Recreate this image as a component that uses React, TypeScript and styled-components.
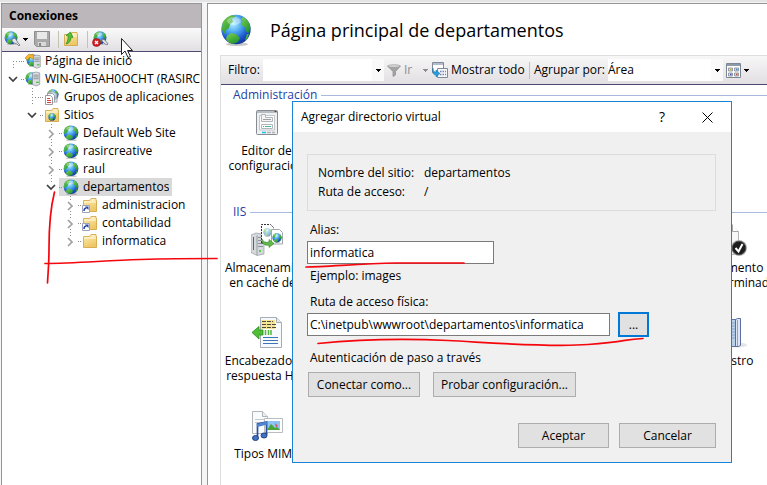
import React from "react";
import styled, { createGlobalStyle, css } from "styled-components";

const GlobalStyle = createGlobalStyle`
  * { box-sizing: border-box; }
  html, body { margin: 0; padding: 0; }
  body, button, input, select {
    font-family: "Open Sans", "Noto Sans", "Segoe UI", sans-serif;
    font-size: 12px;
    line-height: 16px;
    color: #000;
  }
  body { overflow: hidden; }
`;

/* ---------- window frame ---------- */

const Screen = styled.div`
  position: relative;
  display: flex;
  gap: 5px;
  min-height: 100vh;
  padding: 3px 0 0 1px;
  background: #f5f5f5;
  box-shadow: inset 0 2px 0 #e4e4e4;
`;

const Sidebar = styled.aside`
  flex: 0 0 201px;
  min-width: 0;
  display: flex;
  flex-direction: column;
  overflow: hidden;
  background: #fff;
  border: 1px solid #959595;
  border-bottom: 0;
`;

const MainPane = styled.main`
  flex: 1;
  min-width: 0;
  display: flex;
  flex-direction: column;
  overflow: hidden;
  background: #fff;
  border: solid #959595;
  border-width: 1px 0 0 1px;
`;

/* ---------- connections sidebar ---------- */

const SidebarTitle = styled.h2`
  margin: 0;
  height: 24px;
  padding: 4px 7px;
  font-size: 12px;
  line-height: 16px;
  font-weight: 700;
  background: #bbb7bb;
`;

const SidebarTools = styled.div`
  display: flex;
  align-items: center;
  height: 24px;
  padding: 0 2px 1px;
  background: linear-gradient(#fafafa, #e2dfe2);
  border-bottom: 1px solid #514b70;
`;

const ToolButton = styled.button<{ $gapAfter?: number }>`
  display: flex;
  align-items: center;
  gap: 3px;
  flex: none;
  margin-right: ${(p) => p.$gapAfter ?? 0}px;
  padding: 0;
  border: 0;
  background: none;
`;

const Divider = styled.span<{ $space: number }>`
  flex: none;
  width: 1px;
  height: 17px;
  margin-right: ${(p) => p.$space}px;
  background: #c3c3ae;
`;

const TreeList = styled.ul`
  margin: 0;
  padding: 0;
  list-style: none;
`;

const TreeRow = styled.li<{ $depth: number }>`
  display: flex;
  height: 18px;
  padding-left: ${(p) => 3 + p.$depth * 19}px;
  white-space: nowrap;
  svg { flex: none; }
`;

const TreeLabel = styled.span<{ $selected?: boolean }>`
  display: flex;
  align-items: center;
  min-width: 0;
  padding-right: ${(p) => (p.$selected ? 3 : 0)}px;
  background: ${(p) => (p.$selected ? "#d9d9d9" : "transparent")};
`;

const TreeText = styled.span`
  padding-left: 4px;
  overflow: hidden;
`;

/* ---------- main pane ---------- */

const PageHeader = styled.header`
  display: flex;
  align-items: center;
  gap: 18px;
  height: 51px;
  padding-left: 12px;
`;

const PageTitle = styled.h1`
  margin: 0;
  font-size: 18px;
  line-height: 24px;
  font-weight: 400;
  white-space: nowrap;
`;

const Feature = styled.div`
  flex: 1;
  margin-left: 12px;
  border: solid #dedede;
  border-width: 1px 0 0 1px;
`;

const FilterBar = styled.div`
  display: flex;
  align-items: center;
  height: 29px;
  padding-left: 7px;
  background: linear-gradient(#f8f7f8, #e1dfe1);
  border-bottom: 1px solid #4d4770;
  white-space: nowrap;
`;

const BarLabel = styled.label<{ $width: number }>`
  flex: 0 0 ${(p) => p.$width}px;
`;

const Combo = styled.span<{ $width: number }>`
  display: grid;
  grid-template-columns: 1fr 12px;
  align-items: center;
  flex: 0 0 ${(p) => p.$width}px;
  height: 22px;
  margin-right: 3px;
  background: linear-gradient(to left, #f9f9f9 12px, #fff 12px);
  svg { grid-area: 1 / 2; justify-self: center; pointer-events: none; }
`;

const fieldReset = css`
  min-width: 0;
  width: 100%;
  height: 22px;
  padding: 0;
  border: 0;
  outline: 0;
  background: transparent;
  appearance: none;
  grid-row: 1;
`;

const ComboInput = styled.input`
  ${fieldReset}
  grid-column: 1;
`;

const ComboSelect = styled.select`
  ${fieldReset}
  grid-column: 1 / 3;
`;

const BarButton = styled(ToolButton)<{ $width: number; $disabled?: boolean }>`
  flex: 0 0 ${(p) => p.$width}px;
  gap: 3px;
  color: ${(p) => (p.$disabled ? "#8d8d8d" : "#000")};
`;

const BarText = styled.span`
  flex: 1;
  text-align: left;
`;

const Group = styled.section<{ $height?: number }>`
  min-height: ${(p) => p.$height ?? 0}px;
  padding-top: 2px;
`;

const GroupTitle = styled.h3`
  display: flex;
  align-items: center;
  gap: 4px;
  margin: 0;
  padding-left: 12px;
  font-size: 12px;
  line-height: 16px;
  font-weight: 400;
  color: #1e3fa5;
  &::after {
    content: "";
    flex: 1;
    height: 1px;
    background: #a9b8dd;
  }
`;

const IconGrid = styled.div`
  display: grid;
  grid-template-columns: 91px repeat(5, 93px);
  grid-auto-rows: 93px;
`;

const FeatureLink = styled.a<{ $column?: number }>`
  grid-column: ${(p) => p.$column ?? 1};
  display: flex;
  flex-direction: column;
  align-items: center;
  padding-top: 4px;
  line-height: 15px;
  text-align: center;
  white-space: pre;
  color: #000;
  text-decoration: none;
  svg { margin-bottom: 4px; flex: none; }
`;

/* ---------- dialog ---------- */

const Dialog = styled.form`
  position: absolute;
  left: 292px;
  top: 101px;
  width: 440px;
  background: #f0f0f0;
  border: 1px solid #1883d7;
`;

const DialogBar = styled.div`
  display: flex;
  align-items: center;
  height: 30px;
  padding: 0 18px 0 8px;
  background: #fff;
`;

const DialogTitle = styled.h2`
  flex: 1;
  margin: 0;
  font-size: 12px;
  line-height: 16px;
  font-weight: 400;
`;

const CaptionButton = styled(ToolButton)`
  justify-content: center;
  width: 12px;
  margin-left: 33px;
  font-size: 14px;
`;

const DialogBody = styled.div`
  padding: 22px 15px 14px 14px;
`;

const SiteInfo = styled.dl`
  display: grid;
  grid-template-columns: 106px 1fr;
  row-gap: 3px;
  margin: 0 0 11px;
  padding: 10px;
  border: 1px solid #dcdcdc;
  dt, dd { margin: 0; }
`;

const Field = styled.div`
  display: flex;
  flex-direction: column;
  margin-bottom: 10px;
  label, p { margin: 0; padding-left: 3px; }
  &:last-child { margin-bottom: 0; }
`;

const FieldLine = styled.div`
  display: flex;
  align-items: center;
  gap: 8px;
  height: 25px;
  margin: 2px 0 3px;
`;

const TextBox = styled.input<{ $width: number }>`
  width: ${(p) => p.$width}px;
  height: 23px;
  padding: 0 2px;
  border: 1px solid #7a7a7a;
  border-radius: 0;
  background: #fff;
  outline: 0;
`;

const PushButton = styled.button<{ $width: number; $focused?: boolean }>`
  flex: 0 0 ${(p) => p.$width}px;
  height: 25px;
  padding: 0;
  border: ${(p) => (p.$focused ? "2px solid #0078d7" : "1px solid #adadad")};
  border-radius: 0;
  background: #e1e1e1;
`;

const ButtonRow = styled.div<{ $end?: boolean }>`
  display: flex;
  gap: ${(p) => (p.$end ? 10 : 13)}px;
  justify-content: ${(p) => (p.$end ? "flex-end" : "flex-start")};
  margin-top: ${(p) => (p.$end ? 26 : 6)}px;
  padding-left: 1px;
`;

const Overlay = styled.svg`
  position: absolute;
  left: 0;
  top: 0;
  pointer-events: none;
`;

/* ---------- drawings ---------- */

const GlobeArt = () => (
  <>
    <defs>
      <radialGradient id="sea" cx="0.4" cy="0.3" r="0.75">
        <stop offset="0" stopColor="#b8f2ff" />
        <stop offset="0.4" stopColor="#4aa6f0" />
        <stop offset="0.75" stopColor="#1c50cc" />
        <stop offset="1" stopColor="#10308c" />
      </radialGradient>
      <linearGradient id="land" x2="0.6" y2="1">
        <stop offset="0" stopColor="#7fd04e" />
        <stop offset="1" stopColor="#22962f" />
      </linearGradient>
    </defs>
    <ellipse cx="17" cy="30.3" rx="11" ry="1.7" fill="#777" opacity="0.4" />
    <circle cx="16" cy="15.5" r="14.7" fill="url(#sea)" />
    <path d="M2.500 9C5 4 9 1.500 14 1l1 2-3 2 1 3-3 2-1 4-3 2-1 4-3-4z" fill="url(#land)" />
    <path d="M23 3c4 2 7 6 7.500 11l-2 5-2-1-1-4-4-3 1-4-1-2z" fill="url(#land)" />
    <path d="M7 22l4-3 5 1 4 4-2 4-5 2-5-2-2-3z" fill="url(#land)" />
    <path d="M27 20h2l-2 5-2 1z" fill="#43b434" />
    <ellipse cx="14" cy="7" rx="7" ry="4" fill="#fff" opacity="0.35" />
  </>
);

const Globe = ({ size = 16 }: { size?: number }) => (
  <svg width={size} height={size} viewBox="0 0 32 32"><GlobeArt /></svg>
);

const MiniGlobe = ({ x, y, s }: { x: number; y: number; s: number }) => (
  <svg x={x} y={y} width={s} height={s} viewBox="0 0 32 32"><GlobeArt /></svg>
);

const ServerTower = ({ x = 0, y = 0, s = 1 }: { x?: number; y?: number; s?: number }) => (
  <g transform={`translate(${x} ${y}) scale(${s})`}>
    <path d="M0 1l4-1 4 1v13l-4 1.500L0 14z" fill="#d9dde0" stroke="#7c848b" strokeWidth="0.7" />
    <path d="M1 3.500h6M1 5.500h6M1 7.500h6" stroke="#7d868d" strokeWidth="0.9" />
    <path d="M4 11.500h3" stroke="#48c23c" strokeWidth="1.400" />
  </g>
);

const HomeIcon = () => (
  <svg width="16" height="16" viewBox="0 0 16 16">
    <MiniGlobe x={1} y={1} s={13} />
    <path d="M0 5l4-4 2 1 2-1 1 4-2 1-2-2-3 3z" fill="#f3b62d" stroke="#c07d12" strokeWidth="0.6" />
    <ServerTower x={8.500} y={2} s={0.85} />
  </svg>
);

const ServerIcon = () => (
  <svg width="16" height="16" viewBox="0 0 16 16">
    <MiniGlobe x={0} y={1} s={13} />
    <ServerTower x={7.500} y={1} s={0.9} />
  </svg>
);

const PoolsIcon = () => (
  <svg width="16" height="16" viewBox="0 0 16 16">
    <MiniGlobe x={3} y={0} s={12} />
    <path d="M4 3h6l3 2v8H4z" fill="#fff" fillOpacity="0.6" stroke="#8a8f99" strokeWidth="0.8" />
    <path d="M3.500 12V4.500h5l2 2V13" fill="#fff" stroke="#8a8f99" strokeWidth="0.8" />
    <path d="M1.500 6.500h5l2 2v7h-7z" fill="#fff" stroke="#7e838d" strokeWidth="0.8" />
    <path d="M3 9.500h3M3 11.500h4M3 13.500h4" stroke="#d1423c" />
  </svg>
);

const Folder = () => (
  <>
    <defs>
      <linearGradient id="folder" x2="0.4" y2="1">
        <stop offset="0" stopColor="#ffeeb0" />
        <stop offset="1" stopColor="#eec766" />
      </linearGradient>
    </defs>
    <path d="M1.500 3.500h6l1.500-2h5v2h.5v11h-13z" fill="url(#folder)" stroke="#cf9f3d" strokeWidth="0.8" />
    <path d="M2 5h12M9.500 3h4" stroke="#fffbe6" />
  </>
);

const FolderIcon = () => (
  <svg width="16" height="16" viewBox="0 0 16 16"><Folder /></svg>
);

const SitesIcon = () => (
  <svg width="16" height="16" viewBox="0 0 16 16"><Folder /><MiniGlobe x={4} y={6} s={8} /></svg>
);

const LinkFolderIcon = () => (
  <svg width="16" height="16" viewBox="0 0 16 16">
    <Folder />
    <path d="M.5 8.500h7v7h-7z" fill="#fff" stroke="#9da3b8" />
    <path d="M2 14c0-2 1-3 2.500-3" fill="none" stroke="#253fae" strokeWidth="1.400" />
    <path d="M3 9.500h3.500V13z" fill="#253fae" />
  </svg>
);

type ExpanderProps = { state?: string; above?: boolean; below?: boolean; joint?: boolean };

const Expander = ({ state, above, below, joint }: ExpanderProps) => (
  <svg width="16" height="18" viewBox="0 0 16 18">
    <g stroke="#8c8c8c" strokeDasharray="1 2" shapeRendering="crispEdges">
      {above && <path d={joint ? "M8.500 0v9" : "M8.500 0v4"} />}
      {below && <path d={joint ? "M8.500 9v9" : "M8.500 15v3"} />}
      {joint && <path d="M8 9.500h8" />}
    </g>
    {state === "open" && <path d="M4 7l4 4 4-4" fill="none" stroke="#404040" strokeWidth="1.700" />}
    {state === "closed" && <path d="M6 6l4 4-4 4" fill="none" stroke="#a0a0a0" strokeWidth="1.700" />}
  </svg>
);

const Stub = () => (
  <svg width="4" height="18" viewBox="0 0 4 18">
    <path d="M0 9.500h4" stroke="#8c8c8c" strokeDasharray="1 1" shapeRendering="crispEdges" />
  </svg>
);

const Caret = ({ color = "#000" }: { color?: string }) => (
  <svg width="5" height="3" viewBox="0 0 5 3" shapeRendering="crispEdges">
    <path d="M0 0h5v1H4v1H3v1H2V2H1V1H0z" fill={color} />
  </svg>
);

const ConnectIcon = () => (
  <svg width="16" height="16" viewBox="0 0 16 16">
    <MiniGlobe x={0} y={0} s={14} />
    <path d="M8 8l3-1 2 3 1 2 2 2-1 1-2-2-3-1-2-2z" fill="#dfe4ea" stroke="#68747f" strokeWidth="0.8" />
  </svg>
);

const SaveIcon = () => (
  <svg width="16" height="16" viewBox="0 0 16 16">
    <path d="M.5.500h15v15h-13l-2-2z" fill="#a9a9a9" stroke="#8f8f8f" />
    <path d="M3 1h10v7H3z" fill="#e8e8e8" />
    <path d="M4 11h8v4H4z" fill="#d8d8d8" />
    <path d="M5 12h2v3H5z" fill="#858585" />
  </svg>
);

const UpFolderIcon = () => (
  <svg width="16" height="16" viewBox="0 0 16 16">
    <Folder />
    <path d="M3 13c4-1 5-4 5-7l2 .5L7.500 1 3 4.500l2.200.500C5 8 5 10 3 13z" fill="#55c139" stroke="#2c8420" strokeWidth="0.7" />
  </svg>
);

const DisconnectIcon = () => (
  <svg width="17" height="16" viewBox="0 0 17 16">
    <MiniGlobe x={1} y={0} s={14} />
    <path d="M10 8l3 1 3 4-1 1-2-1-3-3z" fill="#dfe4ea" stroke="#68747f" strokeWidth="0.8" />
    <circle cx="4.500" cy="11.500" r="4" fill="#d21f26" stroke="#8f1116" strokeWidth="0.6" />
    <path d="M3 10l3 3M6 10l-3 3" stroke="#fff" strokeWidth="1.300" />
  </svg>
);

const FunnelIcon = () => (
  <svg width="14" height="13" viewBox="0 0 14 13">
    <path d="M.5 2C2 .5 12 .5 13.500 2L8.500 7.500V11L6 12.500v-5z" fill="#a4a4a4" stroke="#8b8b8b" strokeWidth="0.7" />
    <ellipse cx="7" cy="2" rx="5.500" ry="1" fill="#d0d0d0" />
  </svg>
);

const ShowAllIcon = () => (
  <svg width="16" height="16" viewBox="0 0 16 16">
    <path d="M.5.500h11v10H.5z" fill="#fff" stroke="#7f8b99" />
    <path d="M1 2h10" stroke="#b3bdc9" strokeWidth="2" />
    <path d="M5.500 6.500h10v9h-10z" fill="#f4f7fb" stroke="#7f8b99" />
    <path d="M8 9.500h6M8 12.500h6" stroke="#7684a7" strokeWidth="1.500" strokeDasharray="1.500 1" />
    <path d="M1 6c0 3 1 4 3 4V8l4 3.500L4 15v-2C1 13 0 10 1 6z" fill="#2b9bdc" stroke="#1b6fa6" strokeWidth="0.5" />
  </svg>
);

const ViewIcon = () => (
  <svg width="15" height="15" viewBox="0 0 15 15">
    <path d="M.5.500h14v14H.5z" fill="#fff" stroke="#7c8793" />
    <path d="M1 2h13" stroke="#8e9aa6" strokeWidth="2" />
    <path d="M2.500 5h4v3h-4zM8.500 5h4v3h-4zM2.500 10h4v3h-4zM8.500 10h4v3h-4z" fill="#dfe3e8" stroke="#7c8793" strokeWidth="0.8" />
    <path d="M4 6.500h1.500" stroke="#c9a21e" strokeWidth="1.500" />
    <path d="M10 6.500h1.500" stroke="#2d8ed2" strokeWidth="1.500" />
    <path d="M4 11.500h1.500" stroke="#4a43c0" strokeWidth="1.500" />
    <path d="M10 11.500h1.500" stroke="#cc4c22" strokeWidth="1.500" />
  </svg>
);

const CloseIcon = () => (
  <svg width="11" height="11" viewBox="0 0 11 11">
    <path d="M.5.500l10 10M10.500.500l-10 10" stroke="#000" />
  </svg>
);

const ConfigEditorIcon = () => (
  <svg width="32" height="32" viewBox="0 0 32 32">
    <rect x="5.500" y="3.500" width="21" height="24" rx="1" fill="#eef0f1" stroke="#868c91" />
    <path d="M6 5h20" stroke="#b7bcc0" strokeWidth="2" />
    <path d="M23.500 4.500h2" stroke="#444" />
    <path d="M8.500 23V8.500h15V23z" fill="#fff" stroke="#c1c6ca" />
    <path d="M10.500 7.500h4v3h7v4h-11z" fill="#f4f4f4" stroke="#b1b6ba" />
    <path d="M12 12.500h8" stroke="#9ba0a5" />
    <path d="M10.500 17.500h11v4h-11z" fill="#fff" stroke="#b1b6ba" />
    <path d="M12 19.500h1" stroke="#14b5e8" />
    <path d="M14 19.500h6" stroke="#52b7a1" />
    <path d="M11 25.500h4" stroke="#19c0e8" strokeWidth="1.500" />
    <path d="M16 25.500h4M21 25.500h3" stroke="#aeb3b8" strokeWidth="1.500" />
  </svg>
);

const CacheIcon = () => (
  <svg width="32" height="32" viewBox="0 0 32 32">
    <path d="M0 11l5-2 8 1.500V30l-7 1.500L0 28.500z" fill="#d5d9dc" stroke="#959ba0" strokeWidth="0.7" />
    <path d="M6 11.500V31" stroke="#969da2" />
    <path d="M7 13.500h5M7 16.500h5M7 19.500h5M7 22.500h5" stroke="#8a9299" />
    <path d="M2.500 13v13" stroke="#5a6268" />
    <path d="M8 27h2" stroke="#55d443" strokeWidth="2" />
    <path d="M10.500 19V.5h9l3 3V19z" fill="#fff" stroke="#333" strokeDasharray="2 1" />
    <g opacity="0.5"><MiniGlobe x={12} y={4} s={9} /></g>
    <path d="M20.500 5.500h8l3 3V20h-11z" fill="#fff" stroke="#a0a6ab" />
    <MiniGlobe x={21} y={9} s={10} />
    <path d="M11 15c1 3 4 4 7 3v-2.500l5 4-5 4V21c-4 1-7-1-7-6z" fill="#61bb48" stroke="#368425" strokeWidth="0.6" />
  </svg>
);

const HeadersIcon = () => (
  <svg width="32" height="32" viewBox="0 0 32 32">
    <path d="M9.500.500h16l5 5v25h-21z" fill="#f7fafd" stroke="#a5adb7" />
    <path d="M25.500.500v5h5" fill="#e4e8ee" stroke="#a5adb7" />
    <path d="M10 3h14v9H10z" fill="#f5e396" />
    <path d="M11 4.500h11M11 7.500h15M11 10.500h15" stroke="#4b4a3b" strokeDasharray="4 1" />
    <path d="M12 20.500h15M12 23.500h15M12 26.500h15" stroke="#3c74b5" />
    <path d="M1 15.500l7-6V13h4v5H8v4z" fill="#4fbe36" stroke="#298a1c" strokeWidth="0.8" />
    <path d="M14.500 13v5M17.500 13v5M20 13v5" stroke="#52b83c" strokeWidth="1.500" />
  </svg>
);

const MimeIcon = () => (
  <svg width="32" height="32" viewBox="0 0 32 32">
    <path d="M1.500 1.500h10l5 5v17h-15z" fill="#fafbfc" stroke="#b0b5ba" />
    <path d="M11.500 1.500v5h5" fill="#eee" stroke="#b0b5ba" />
    <path d="M4 9.500h9M4 12.500h9" stroke="#c3c7cb" />
    <path d="M13.500 8.500h18v14h-18z" fill="#fff" stroke="#b9bdc2" />
    <path d="M16 11h13v9H16z" fill="#8fc3f1" />
    <path d="M16 20l4-6 4 4 2-1 3 3z" fill="#49a535" />
    <path d="M24 13l3 3-2 1z" fill="#db4a35" />
    <path d="M6.500 27V14l9-2v13" fill="none" stroke="#294f9f" strokeWidth="1.700" />
    <path d="M6 15.500l10-2.500" stroke="#4f82cf" strokeWidth="3" />
    <ellipse cx="4.500" cy="28" rx="3" ry="2.500" fill="#3f71c5" stroke="#233f83" />
    <ellipse cx="13" cy="25.500" rx="3" ry="2.500" fill="#3f71c5" stroke="#233f83" />
  </svg>
);

const DefaultDocIcon = () => (
  <svg width="32" height="32" viewBox="0 0 32 32">
    <path d="M2.500.500h14l7 7v23h-21z" fill="#f7f7f7" stroke="#b5b5b5" />
    <path d="M17.500.500v7h6" fill="#fff" stroke="#a5a5a5" />
    <circle cx="24" cy="24" r="8" fill="#bcbcbc" />
    <circle cx="24" cy="24" r="6.800" fill="#1d1d1d" stroke="#4d4d4d" />
    <path d="M20.500 24l3 3.500 4-7.500" fill="none" stroke="#fff" strokeWidth="2" />
  </svg>
);

const LogIcon = () => (
  <svg width="32" height="32" viewBox="0 0 32 32">
    <ellipse cx="22" cy="28" rx="10" ry="2.500" fill="#999" opacity="0.25" />
    <path d="M5.500 2.500h18v27h-18z" fill="#b9d0ea" stroke="#5e74a5" />
    <path d="M7 6h14M7 9h14M7 12h14M7 15h14M7 18h14M7 21h14" stroke="#86a8d2" />
    <path d="M20.500 2.500l2-1h3v27l-2 1h-3z" fill="#dfe7f4" stroke="#5b6ca4" />
    <path d="M22.500 3v26" stroke="#8fa1cc" />
  </svg>
);

/* ---------- data ---------- */

type TreeNode = {
  label: string;
  depth: number;
  icon: React.ReactNode;
  state?: "open" | "closed";
  above?: boolean;
  below?: boolean;
  selected?: boolean;
};

const nodes: TreeNode[] = [
  { label: "Página de inicio", depth: 0, icon: <HomeIcon />, below: true },
  { label: "WIN-GIE5AH0OCHT (RASIRCI", depth: 0, icon: <ServerIcon />, state: "open" },
  { label: "Grupos de aplicaciones", depth: 1, icon: <PoolsIcon />, above: true, below: true },
  { label: "Sitios", depth: 1, icon: <SitesIcon />, state: "open" },
  { label: "Default Web Site", depth: 2, icon: <Globe />, state: "closed", above: true, below: true },
  { label: "rasircreative", depth: 2, icon: <Globe />, state: "closed", above: true, below: true },
  { label: "raul", depth: 2, icon: <Globe />, state: "closed", above: true, below: true },
  { label: "departamentos", depth: 2, icon: <Globe />, state: "open", above: true, selected: true },
  { label: "administracion", depth: 3, icon: <LinkFolderIcon />, state: "closed", above: true, below: true },
  { label: "contabilidad", depth: 3, icon: <LinkFolderIcon />, state: "closed", above: true, below: true },
  { label: "informatica", depth: 3, icon: <FolderIcon />, state: "closed", above: true },
];

/* ---------- page ---------- */

export default function App() {
  return (
    <>
      <GlobalStyle />
      <Screen>
        <Sidebar>
          <SidebarTitle>Conexiones</SidebarTitle>
          <SidebarTools>
            <ToolButton aria-label="Conectar" $gapAfter={6}><ConnectIcon /><Caret /></ToolButton>
            <ToolButton aria-label="Guardar" $gapAfter={8}><SaveIcon /></ToolButton>
            <Divider $space={4} />
            <ToolButton aria-label="Subir" $gapAfter={8}><UpFolderIcon /></ToolButton>
            <Divider $space={4} />
            <ToolButton aria-label="Desconectar"><DisconnectIcon /></ToolButton>
          </SidebarTools>
          <TreeList role="tree">
            {nodes.map((n) => (
              <TreeRow key={n.label} $depth={n.depth} role="treeitem" aria-selected={!!n.selected}>
                <Expander state={n.state} above={n.above} below={n.below} joint={!n.state} />
                <TreeLabel $selected={n.selected}>
                  <Stub />
                  {n.icon}
                  <TreeText>{n.label}</TreeText>
                </TreeLabel>
              </TreeRow>
            ))}
          </TreeList>
        </Sidebar>

        <MainPane>
          <PageHeader>
            <Globe size={32} />
            <PageTitle>Página principal de departamentos</PageTitle>
          </PageHeader>
          <Feature>
            <FilterBar>
              <BarLabel $width={35} htmlFor="filter">Filtro:</BarLabel>
              <Combo $width={121}>
                <ComboInput id="filter" />
                <Caret />
              </Combo>
              <BarButton $width={41} $gapAfter={4} $disabled>
                <FunnelIcon /><BarText>Ir</BarText><Caret color="#8d8d8d" />
              </BarButton>
              <BarButton $width={94} $gapAfter={3}><ShowAllIcon /><BarText>Mostrar todo</BarText></BarButton>
              <Divider $space={4} />
              <BarLabel $width={74} htmlFor="group">Agrupar por:</BarLabel>
              <Combo $width={115}>
                <ComboSelect id="group"><option>Área</option></ComboSelect>
                <Caret />
              </Combo>
              <ToolButton aria-label="Vista"><ViewIcon /><Caret /></ToolButton>
            </FilterBar>
            <Group $height={117}>
              <GroupTitle>Administración</GroupTitle>
              <IconGrid>
                <FeatureLink href="#config"><ConfigEditorIcon />{"Editor de\nconfiguración"}</FeatureLink>
              </IconGrid>
            </Group>
            <Group>
              <GroupTitle>IIS</GroupTitle>
              <IconGrid>
                <FeatureLink href="#cache"><CacheIcon />{"Almacenamien\nen caché de r"}</FeatureLink>
                <FeatureLink href="#default" $column={6}><DefaultDocIcon />{"Documento\npredeterminado"}</FeatureLink>
                <FeatureLink href="#headers"><HeadersIcon />{"Encabezados d\nrespuesta HTT"}</FeatureLink>
                <FeatureLink href="#log" $column={6}><LogIcon />Registro</FeatureLink>
                <FeatureLink href="#mime"><MimeIcon />Tipos MIME</FeatureLink>
              </IconGrid>
            </Group>
          </Feature>
        </MainPane>

        <Dialog role="dialog" aria-labelledby="dialog-title" onSubmit={(e) => e.preventDefault()}>
          <DialogBar>
            <DialogTitle id="dialog-title">Agregar directorio virtual</DialogTitle>
            <CaptionButton type="button">?</CaptionButton>
            <CaptionButton type="button" aria-label="Cerrar"><CloseIcon /></CaptionButton>
          </DialogBar>
          <DialogBody>
            <SiteInfo>
              <dt>Nombre del sitio:</dt><dd>departamentos</dd>
              <dt>Ruta de acceso:</dt><dd>/</dd>
            </SiteInfo>
            <Field>
              <label htmlFor="alias">Alias:</label>
              <FieldLine><TextBox id="alias" $width={187} defaultValue="informatica" /></FieldLine>
              <p>Ejemplo: images</p>
            </Field>
            <Field>
              <label htmlFor="path">Ruta de acceso física:</label>
              <FieldLine>
                <TextBox id="path" $width={303} defaultValue="C:\inetpub\wwwroot\departamentos\informatica" />
                <PushButton type="button" $width={31} $focused>...</PushButton>
              </FieldLine>
            </Field>
            <Field>
              <p>Autenticación de paso a través</p>
              <ButtonRow>
                <PushButton type="button" $width={112}>Conectar como...</PushButton>
                <PushButton type="button" $width={143}>Probar configuración...</PushButton>
              </ButtonRow>
              <ButtonRow $end>
                <PushButton type="submit" $width={91}>Aceptar</PushButton>
                <PushButton type="button" $width={97}>Cancelar</PushButton>
              </ButtonRow>
            </Field>
          </DialogBody>
        </Dialog>

        <Overlay width="767" height="485" viewBox="0 0 767 485">
          <g fill="none" stroke="#f5060d" strokeWidth="1.700" strokeLinecap="round">
            <path d="M54.500 192C51 206 49 230 49 248s-1 24-1.500 35" />
            <path d="M45 263.500c30 0 60-3 95-4s50-1 77-1" />
            <path d="M306 267c20 0 50-3 90-4h68" />
            <path d="M318 343.500c40-4 90-5 130-3s100 7 140 4 35-5 55-6" />
          </g>
          <path d="M121.500 38.500v16l3.500-3.500 3 6.500 2.500-1-3-6h5z" fill="#fff" stroke="#222" />
        </Overlay>
      </Screen>
    </>
  );
}
